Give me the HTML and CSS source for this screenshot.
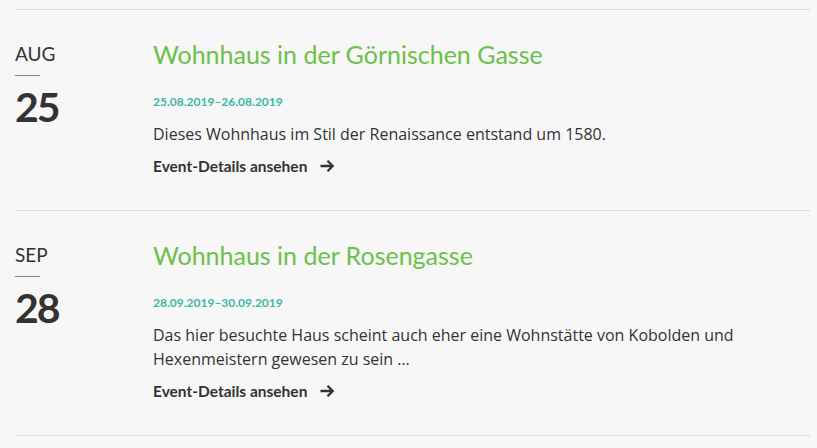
FILE: index.html
```html
<!DOCTYPE html>
<html lang="de">
<head>
<meta charset="utf-8">
<link rel="stylesheet" href="styles.css">
</head>
<body>
<div class="list">
  <article class="event">
    <div class="date">
      <div class="month">AUG</div>
      <div class="rule"></div>
      <div class="day">25</div>
    </div>
    <div class="body">
      <h2 class="title">Wohnhaus in der Görnischen Gasse</h2>
      <div class="range">25.08.2019–26.08.2019</div>
      <p class="desc">Dieses Wohnhaus im Stil der Renaissance entstand um 1580.</p>
      <a class="more" href="#">Event-Details ansehen <svg class="arrow" viewBox="0 0 16 16" width="16" height="16"><path d="M1.5 8h12M8.5 2.8l5.2 5.2-5.2 5.2" fill="none" stroke="#333" stroke-width="2.3"/></svg></a>
    </div>
  </article>
  <article class="event">
    <div class="date">
      <div class="month">SEP</div>
      <div class="rule"></div>
      <div class="day">28</div>
    </div>
    <div class="body">
      <h2 class="title">Wohnhaus in der Rosengasse</h2>
      <div class="range">28.09.2019–30.09.2019</div>
      <p class="desc">Das hier besuchte Haus scheint auch eher eine Wohnstätte von Kobolden und Hexenmeistern gewesen zu sein …</p>
      <a class="more" href="#">Event-Details ansehen <svg class="arrow" viewBox="0 0 16 16" width="16" height="16"><path d="M1.5 8h12M8.5 2.8l5.2 5.2-5.2 5.2" fill="none" stroke="#333" stroke-width="2.3"/></svg></a>
    </div>
  </article>
</div>
</body>
</html>
```
FILE: styles.css
```css
html, body {
  margin: 0;
  padding: 0;
  background: #f7f7f7;
}
body {
  padding: 9px 7px 0 15px;
  font-family: "Open Sans", "Liberation Sans", sans-serif;
  color: #333;
}
.list {
  border-top: 1px solid #dcdcdc;
}
.event {
  display: flex;
  border-bottom: 1px solid #dcdcdc;
  padding: 28px 0 33px;
}
.date {
  width: 138px;
  flex: none;
  padding-top: 4px;
}
.month {
  font-family: Lato, sans-serif;
  font-size: 19px;
  line-height: 24px;
  color: #333;
}
.rule {
  width: 25px;
  height: 1px;
  background: #888;
  margin: 9px 0 10px;
}
.day {
  font-family: Lato, sans-serif;
  font-weight: 700;
  font-size: 41px;
  line-height: 42px;
  letter-spacing: -2px;
  color: #333;
}
.body {
  flex: 1;
}
.title {
  margin: 0;
  font-family: Lato, sans-serif;
  font-weight: 400;
  font-size: 25px;
  line-height: 32px;
  color: #6cc04a;
}
.range {
  margin-top: 24px;
  font-family: Lato, sans-serif;
  font-weight: 700;
  font-size: 12px;
  line-height: 16px;
  color: #3bb8a5;
}
.desc {
  margin: 12px 0 0;
  font-size: 16px;
  line-height: 24px;
  color: #333;
}
.more {
  display: inline-flex;
  align-items: center;
  gap: 12px;
  margin-top: 10px;
  font-family: Lato, sans-serif;
  font-weight: 700;
  font-size: 15.5px;
  line-height: 20px;
  color: #333;
  text-decoration: none;
}
```
